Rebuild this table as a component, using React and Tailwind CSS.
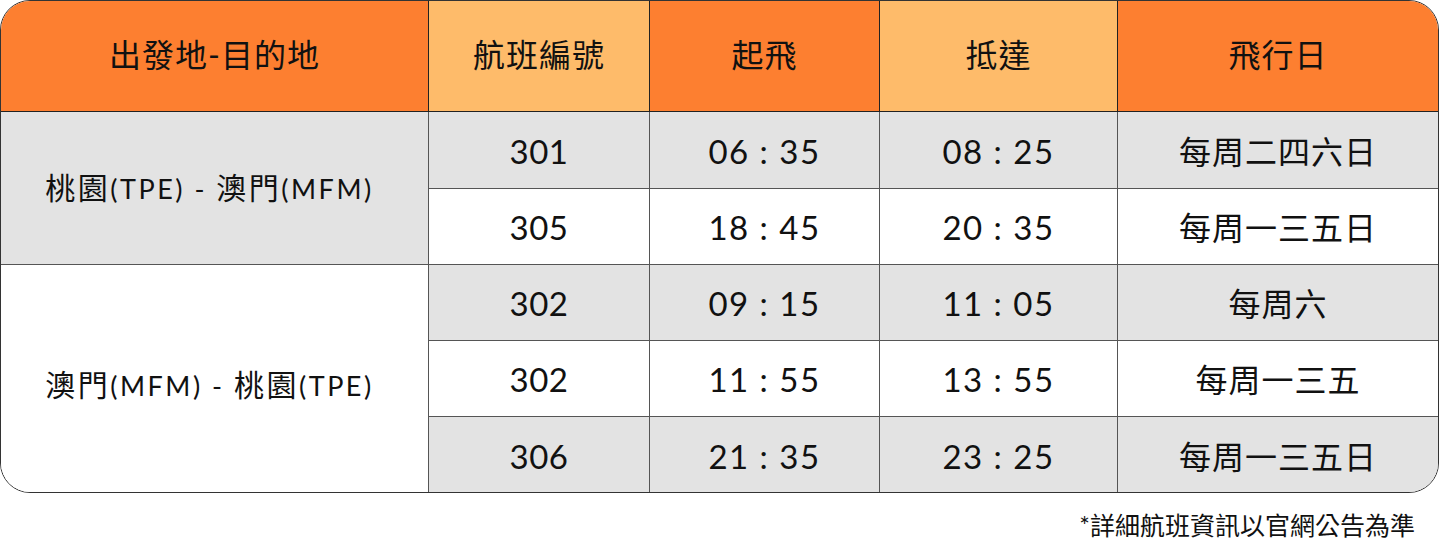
import React from "react";

const font = { fontFamily: 'Lato, "Noto Sans CJK TC", "Noto Sans", sans-serif' };

const rows = [
  { no: "301", dep: "06 : 35", arr: "08 : 25", days: "每周二四六日", bg: "bg-[#e3e3e3]" },
  { no: "305", dep: "18 : 45", arr: "20 : 35", days: "每周一三五日", bg: "bg-white" },
  { no: "302", dep: "09 : 15", arr: "11 : 05", days: "每周六", bg: "bg-[#e3e3e3]" },
  { no: "302", dep: "11 : 55", arr: "13 : 55", days: "每周一三五", bg: "bg-white" },
  { no: "306", dep: "21 : 35", arr: "23 : 25", days: "每周一三五日", bg: "bg-[#e3e3e3]" },
];

const rowStarts = ["row-start-2", "row-start-3", "row-start-4", "row-start-5", "row-start-6"];

export default function App() {
  return (
    <div className="w-[1439px] h-[547px] bg-white text-[#111]" style={font}>
      <div className="w-[1439px] h-[493px] border border-[#333] rounded-[30px] overflow-hidden grid grid-cols-[428px_221px_230px_238px_1fr] grid-rows-[111px_77px_76px_76px_76px_76px]">
        <div className="col-start-1 row-start-1 bg-[#fd7f30] border-r border-b border-[#222] flex items-center justify-center text-[32px] tracking-[1px] pb-[2px]">出發地-目的地</div>
        <div className="col-start-2 row-start-1 bg-[#febb6a] border-r border-b border-[#222] flex items-center justify-center text-[32px] tracking-[1px] pb-[2px]">航班編號</div>
        <div className="col-start-3 row-start-1 bg-[#fd7f30] border-r border-b border-[#222] flex items-center justify-center text-[32px] tracking-[1px] pb-[2px]">起飛</div>
        <div className="col-start-4 row-start-1 bg-[#febb6a] border-r border-b border-[#222] flex items-center justify-center text-[32px] tracking-[1px] pb-[2px]">抵達</div>
        <div className="col-start-5 row-start-1 bg-[#fd7f30] border-b border-[#222] flex items-center justify-center text-[32px] tracking-[1px] pb-[2px]">飛行日</div>

        <div className="col-start-1 row-start-2 row-span-2 bg-[#e3e3e3] border-r border-b border-[#555] flex items-center justify-center text-[30px] tracking-[2.5px] pb-[2px] pr-[10px]">
          <span>桃園<span className="text-[27px]">(TPE) - </span>澳門<span className="text-[27px]">(MFM)</span></span>
        </div>
        <div className="col-start-1 row-start-4 row-span-3 bg-white border-r border-[#555] flex items-center justify-center text-[30px] tracking-[2.5px] pt-[10px] pr-[10px]">
          <span>澳門<span className="text-[27px]">(MFM) - </span>桃園<span className="text-[27px]">(TPE)</span></span>
        </div>

        {rows.map((r, i) => {
          const last = i === rows.length - 1;
          const b = last ? "" : "border-b";
          return (
            <React.Fragment key={i}>
              <div className={`col-start-2 ${rowStarts[i]} ${r.bg} border-r ${b} border-[#555] flex items-center justify-center text-[33px] tracking-[0.5px] pt-[3px]`}>{r.no}</div>
              <div className={`col-start-3 ${rowStarts[i]} ${r.bg} border-r ${b} border-[#555] flex items-center justify-center text-[33px] tracking-[1.5px] pt-[3px]`}>{r.dep}</div>
              <div className={`col-start-4 ${rowStarts[i]} ${r.bg} border-r ${b} border-[#555] flex items-center justify-center text-[33px] tracking-[1.5px] pt-[3px]`}>{r.arr}</div>
              <div className={`col-start-5 ${rowStarts[i]} ${r.bg} ${b} border-[#555] flex items-center justify-center text-[32px] tracking-[1px] pt-[3px]`}>{r.days}</div>
            </React.Fragment>
          );
        })}
      </div>
      <div className="flex justify-end pr-[24px] mt-[14px] text-[25px] leading-[36px]">*詳細航班資訊以官網公告為準</div>
    </div>
  );
}
